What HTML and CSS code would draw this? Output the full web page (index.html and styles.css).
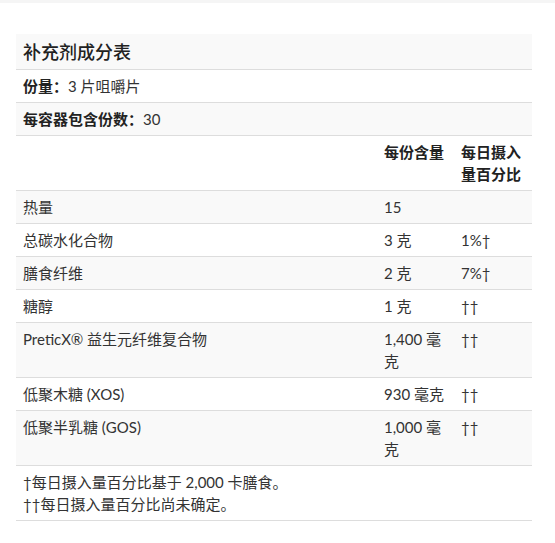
FILE: index.html
```html
<!DOCTYPE html>
<html lang="zh-CN">
<head>
<meta charset="utf-8">
<link rel="stylesheet" href="styles.css">
</head>
<body>
<div class="topband"></div>
<div class="wrap">
  <table class="facts">
    <colgroup>
      <col class="c-name">
      <col class="c-amt">
      <col class="c-dv">
    </colgroup>
    <tbody>
      <tr class="alt"><td colspan="3" class="title">补充剂成分表</td></tr>
      <tr><td colspan="3"><b>份量：</b>3 片咀嚼片</td></tr>
      <tr class="alt"><td colspan="3"><b>每容器包含份数：</b>30</td></tr>
      <tr class="head"><td></td><td>每份含量</td><td>每日摄入量百分比</td></tr>
      <tr class="alt"><td>热量</td><td>15</td><td></td></tr>
      <tr><td>总碳水化合物</td><td>3 克</td><td>1%†</td></tr>
      <tr class="alt"><td>膳食纤维</td><td>2 克</td><td>7%†</td></tr>
      <tr><td>糖醇</td><td>1 克</td><td>††</td></tr>
      <tr class="alt"><td>PreticX® 益生元纤维复合物</td><td>1,400 毫克</td><td>††</td></tr>
      <tr><td>低聚木糖 (XOS)</td><td>930 毫克</td><td>††</td></tr>
      <tr class="alt"><td>低聚半乳糖 (GOS)</td><td>1,000 毫克</td><td>††</td></tr>
      <tr><td colspan="3" class="notes">†每日摄入量百分比基于 2,000 卡膳食。<br>††每日摄入量百分比尚未确定。</td></tr>
    </tbody>
  </table>
</div>
</body>
</html>
```

FILE: styles.css
```css
html, body {
  margin: 0;
  padding: 0;
  background: #ffffff;
}

body {
  font-family: Lato, "Noto Sans CJK SC", sans-serif;
  font-size: 15px;
  color: #333333;
}

.topband {
  height: 3px;
  background: #f5f5f5;
}

.wrap {
  padding: 31px 0 0 16px;
}

.facts {
  width: 516px;
  border-collapse: collapse;
  table-layout: fixed;
}

.c-name { width: 361px; }
.c-amt { width: 77px; }
.c-dv { width: 78px; }

.facts td {
  padding: 5px 7px;
  line-height: 22px;
  vertical-align: top;
  text-align: left;
  border-bottom: 1px solid #dddddd;
}

.facts tr.alt td {
  background: #f9f9f9;
}

.facts td.title {
  font-size: 18px;
  font-weight: 500;
  line-height: 24px;
  padding-top: 6px;
  padding-bottom: 5px;
  color: #222222;
}

.facts b {
  font-weight: 700;
  color: #222222;
}

.facts tr.head td {
  font-weight: 700;
  color: #222222;
}
```
